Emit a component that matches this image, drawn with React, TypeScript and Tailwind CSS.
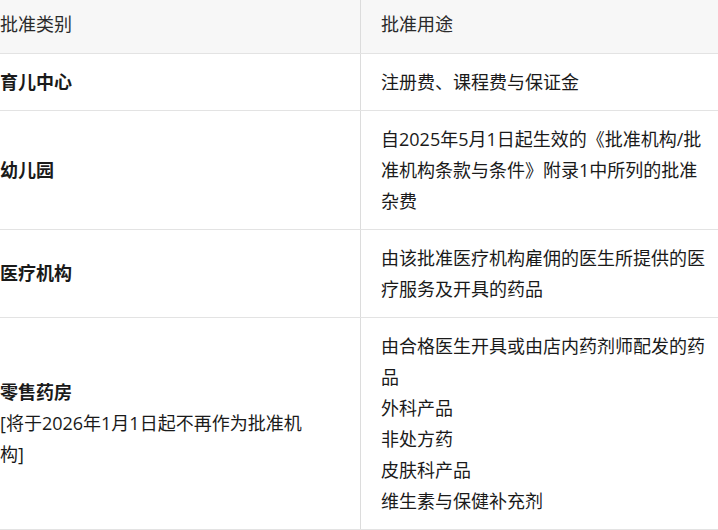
import React from "react";

const font = { fontFamily: '"Open Sans", "Noto Sans CJK SC", sans-serif' };

function Row({
  left,
  right,
  header = false,
}: {
  left: React.ReactNode;
  right: React.ReactNode;
  header?: boolean;
}) {
  const pad = header ? "pt-[9px] pb-[13px]" : "py-[12.5px]";
  return (
    <div className={`flex border-b border-[#e3e3e3] ${header ? "bg-[#f7f7f7]" : "bg-white"}`}>
      <div className={`w-[361px] shrink-0 border-r border-[#dcdcdc] flex items-center ${pad}`}>
        <div className="w-[310px]">{left}</div>
      </div>
      <div className={`flex items-center pl-5 ${pad}`}>
        <div className="w-[330px]">{right}</div>
      </div>
    </div>
  );
}

export default function App() {
  return (
    <div
      className="w-[718px] h-[530px] overflow-hidden bg-white text-[18px] leading-[31px] text-[#1a1a1a]"
      style={font}
    >
      <Row header left={<span className="text-[#2b2b2b]">批准类别</span>} right={<span className="text-[#2b2b2b]">批准用途</span>} />
      <Row left={<b className="font-bold">育儿中心</b>} right={<span>注册费、课程费与保证金</span>} />
      <Row
        left={<b className="font-bold">幼儿园</b>}
        right={<span>自2025年5月1日起生效的《批准机构/批准机构条款与条件》附录1中所列的批准杂费</span>}
      />
      <Row left={<b className="font-bold">医疗机构</b>} right={<span>由该批准医疗机构雇佣的医生所提供的医疗服务及开具的药品</span>} />
      <Row
        left={
          <div>
            <div className="font-bold">零售药房</div>
            <div>[将于2026年1月1日起不再作为批准机构]</div>
          </div>
        }
        right={
          <div>
            <div>由合格医生开具或由店内药剂师配发的药品</div>
            <div>外科产品</div>
            <div>非处方药</div>
            <div>皮肤科产品</div>
            <div>维生素与保健补充剂</div>
          </div>
        }
      />
    </div>
  );
}
